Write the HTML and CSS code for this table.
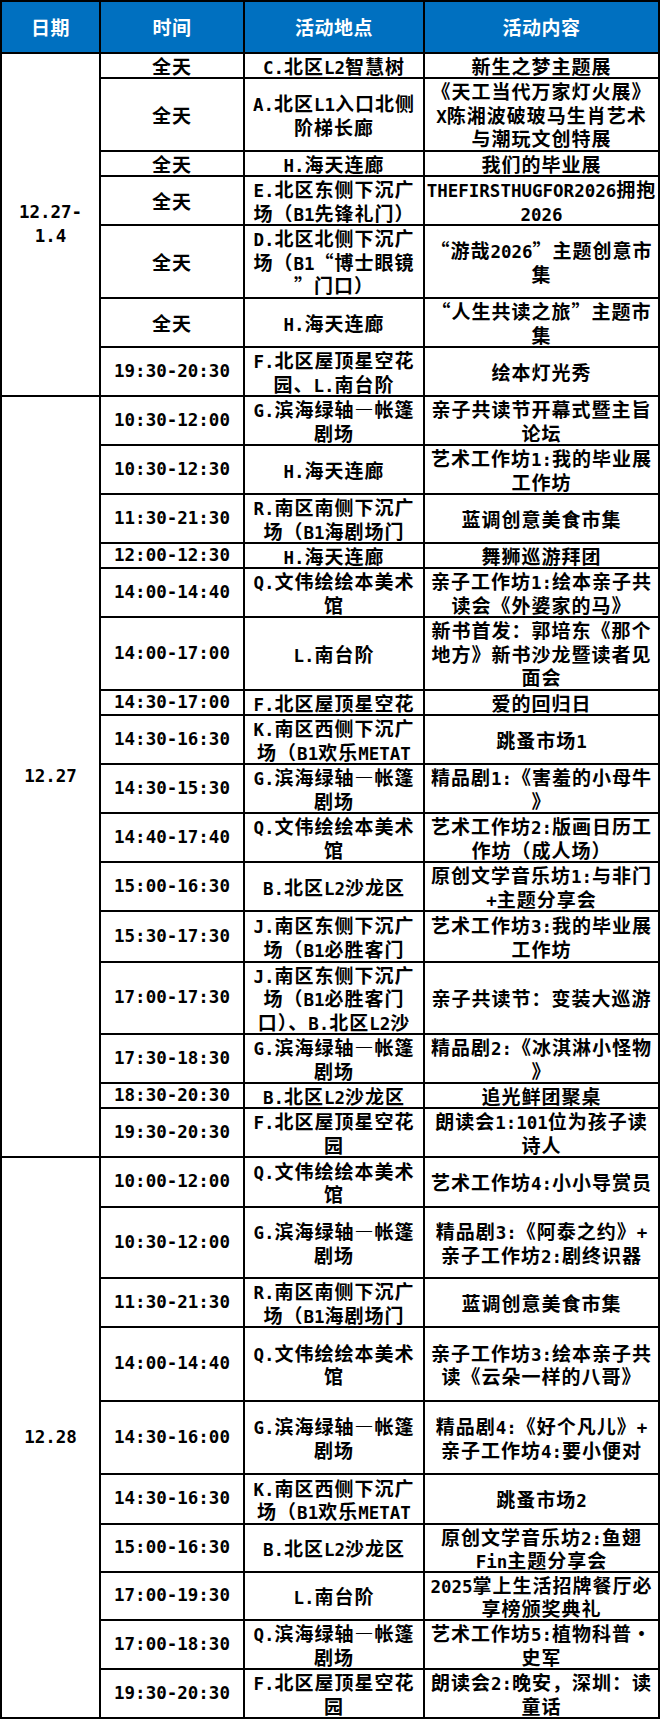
FILE: index.html
```html
<!DOCTYPE html>
<html lang="zh-CN">
<head>
<meta charset="utf-8">
<title>活动日程</title>
<link rel="stylesheet" href="styles.css">
</head>
<body>
<div class="sched">
  <div class="c th"><span class="tx">日期</span></div>
  <div class="c th"><span class="tx">时间</span></div>
  <div class="c th"><span class="tx">活动地点</span></div>
  <div class="c th"><span class="tx">活动内容</span></div>

  <div class="c d span7"><span class="tx">12.27-<br>1.4</span></div>
  <div class="c"><span class="tx">全天</span></div><div class="c"><span class="tx"><span class="m">C.</span>北区<span class="m">L2</span>智慧树</span></div><div class="c"><span class="tx">新生之梦主题展</span></div>
  <div class="c"><span class="tx">全天</span></div><div class="c"><span class="tx"><span class="m">A.</span>北区<span class="m">L1</span>入口北侧<br>阶梯长廊</span></div><div class="c"><span class="tx">《天工当代万家灯火展》<br><span class="m">X</span>陈湘波破玻马生肖艺术<br>与潮玩文创特展</span></div>
  <div class="c"><span class="tx">全天</span></div><div class="c"><span class="tx"><span class="m">H.</span>海天连廊</span></div><div class="c"><span class="tx">我们的毕业展</span></div>
  <div class="c"><span class="tx">全天</span></div><div class="c"><span class="tx"><span class="m">E.</span>北区东侧下沉广<br>场（<span class="m">B1</span>先锋礼门）</span></div><div class="c"><span class="tx"><span class="m">THEFIRSTHUGFOR2026</span>拥抱<br><span class="m">2026</span></span></div>
  <div class="c"><span class="tx">全天</span></div><div class="c"><span class="tx"><span class="m">D.</span>北区北侧下沉广<br>场（<span class="m">B1</span>“博士眼镜<br>”门口）</span></div><div class="c"><span class="tx">“游哉<span class="m">2026</span>”主题创意市<br>集</span></div>
  <div class="c"><span class="tx">全天</span></div><div class="c"><span class="tx"><span class="m">H.</span>海天连廊</span></div><div class="c"><span class="tx">“人生共读之旅”主题市<br>集</span></div>
  <div class="c t"><span class="tx">19:30-20:30</span></div><div class="c"><span class="tx"><span class="m">F.</span>北区屋顶星空花<br>园、<span class="m">L.</span>南台阶</span></div><div class="c"><span class="tx">绘本灯光秀</span></div>

  <div class="c d span16"><span class="tx">12.27</span></div>
  <div class="c t"><span class="tx">10:30-12:00</span></div><div class="c"><span class="tx"><span class="m">G.</span>滨海绿轴—帐篷<br>剧场</span></div><div class="c"><span class="tx">亲子共读节开幕式暨主旨<br>论坛</span></div>
  <div class="c t"><span class="tx">10:30-12:30</span></div><div class="c"><span class="tx"><span class="m">H.</span>海天连廊</span></div><div class="c"><span class="tx">艺术工作坊<span class="m">1:</span>我的毕业展<br>工作坊</span></div>
  <div class="c t"><span class="tx">11:30-21:30</span></div><div class="c"><span class="tx"><span class="m">R.</span>南区南侧下沉广<br>场（<span class="m">B1</span>海剧场门</span></div><div class="c"><span class="tx">蓝调创意美食市集</span></div>
  <div class="c t"><span class="tx">12:00-12:30</span></div><div class="c"><span class="tx"><span class="m">H.</span>海天连廊</span></div><div class="c"><span class="tx">舞狮巡游拜团</span></div>
  <div class="c t"><span class="tx">14:00-14:40</span></div><div class="c"><span class="tx"><span class="m">Q.</span>文伟绘绘本美术<br>馆</span></div><div class="c"><span class="tx">亲子工作坊<span class="m">1:</span>绘本亲子共<br>读会《外婆家的马》</span></div>
  <div class="c t"><span class="tx">14:00-17:00</span></div><div class="c"><span class="tx"><span class="m">L.</span>南台阶</span></div><div class="c"><span class="tx">新书首发：郭培东《那个<br>地方》新书沙龙暨读者见<br>面会</span></div>
  <div class="c t"><span class="tx">14:30-17:00</span></div><div class="c"><span class="tx"><span class="m">F.</span>北区屋顶星空花</span></div><div class="c"><span class="tx">爱的回归日</span></div>
  <div class="c t"><span class="tx">14:30-16:30</span></div><div class="c"><span class="tx"><span class="m">K.</span>南区西侧下沉广<br>场（<span class="m">B1</span>欢乐<span class="m">METAT</span></span></div><div class="c"><span class="tx">跳蚤市场<span class="m">1</span></span></div>
  <div class="c t"><span class="tx">14:30-15:30</span></div><div class="c"><span class="tx"><span class="m">G.</span>滨海绿轴—帐篷<br>剧场</span></div><div class="c"><span class="tx">精品剧<span class="m">1:</span>《害羞的小母牛<br>》</span></div>
  <div class="c t"><span class="tx">14:40-17:40</span></div><div class="c"><span class="tx"><span class="m">Q.</span>文伟绘绘本美术<br>馆</span></div><div class="c"><span class="tx">艺术工作坊<span class="m">2:</span>版画日历工<br>作坊（成人场）</span></div>
  <div class="c t"><span class="tx">15:00-16:30</span></div><div class="c"><span class="tx"><span class="m">B.</span>北区<span class="m">L2</span>沙龙区</span></div><div class="c"><span class="tx">原创文学音乐坊<span class="m">1:</span>与非门<br><span class="m">+</span>主题分享会</span></div>
  <div class="c t"><span class="tx">15:30-17:30</span></div><div class="c"><span class="tx"><span class="m">J.</span>南区东侧下沉广<br>场（<span class="m">B1</span>必胜客门</span></div><div class="c"><span class="tx">艺术工作坊<span class="m">3:</span>我的毕业展<br>工作坊</span></div>
  <div class="c t"><span class="tx">17:00-17:30</span></div><div class="c"><span class="tx"><span class="m">J.</span>南区东侧下沉广<br>场（<span class="m">B1</span>必胜客门<br>口）、<span class="m">B.</span>北区<span class="m">L2</span>沙</span></div><div class="c"><span class="tx">亲子共读节：变装大巡游</span></div>
  <div class="c t"><span class="tx">17:30-18:30</span></div><div class="c"><span class="tx"><span class="m">G.</span>滨海绿轴—帐篷<br>剧场</span></div><div class="c"><span class="tx">精品剧<span class="m">2:</span>《冰淇淋小怪物<br>》</span></div>
  <div class="c t"><span class="tx">18:30-20:30</span></div><div class="c"><span class="tx"><span class="m">B.</span>北区<span class="m">L2</span>沙龙区</span></div><div class="c"><span class="tx">追光鲜团聚桌</span></div>
  <div class="c t"><span class="tx">19:30-20:30</span></div><div class="c"><span class="tx"><span class="m">F.</span>北区屋顶星空花<br>园</span></div><div class="c"><span class="tx">朗读会<span class="m">1:101</span>位为孩子读<br>诗人</span></div>

  <div class="c d span10"><span class="tx">12.28</span></div>
  <div class="c t"><span class="tx">10:00-12:00</span></div><div class="c"><span class="tx"><span class="m">Q.</span>文伟绘绘本美术<br>馆</span></div><div class="c"><span class="tx">艺术工作坊<span class="m">4:</span>小小导赏员</span></div>
  <div class="c t"><span class="tx">10:30-12:00</span></div><div class="c"><span class="tx"><span class="m">G.</span>滨海绿轴—帐篷<br>剧场</span></div><div class="c"><span class="tx">精品剧<span class="m">3:</span>《阿泰之约》<span class="m">+</span><br>亲子工作坊<span class="m">2:</span>剧终识器</span></div>
  <div class="c t"><span class="tx">11:30-21:30</span></div><div class="c"><span class="tx"><span class="m">R.</span>南区南侧下沉广<br>场（<span class="m">B1</span>海剧场门</span></div><div class="c"><span class="tx">蓝调创意美食市集</span></div>
  <div class="c t"><span class="tx">14:00-14:40</span></div><div class="c"><span class="tx"><span class="m">Q.</span>文伟绘绘本美术<br>馆</span></div><div class="c"><span class="tx">亲子工作坊<span class="m">3:</span>绘本亲子共<br>读《云朵一样的八哥》</span></div>
  <div class="c t"><span class="tx">14:30-16:00</span></div><div class="c"><span class="tx"><span class="m">G.</span>滨海绿轴—帐篷<br>剧场</span></div><div class="c"><span class="tx">精品剧<span class="m">4:</span>《好个凡儿》<span class="m">+</span><br>亲子工作坊<span class="m">4:</span>要小便对</span></div>
  <div class="c t"><span class="tx">14:30-16:30</span></div><div class="c"><span class="tx"><span class="m">K.</span>南区西侧下沉广<br>场（<span class="m">B1</span>欢乐<span class="m">METAT</span></span></div><div class="c"><span class="tx">跳蚤市场<span class="m">2</span></span></div>
  <div class="c t"><span class="tx">15:00-16:30</span></div><div class="c"><span class="tx"><span class="m">B.</span>北区<span class="m">L2</span>沙龙区</span></div><div class="c"><span class="tx">原创文学音乐坊<span class="m">2:</span>鱼翅<br><span class="m">Fin</span>主题分享会</span></div>
  <div class="c t"><span class="tx">17:00-19:30</span></div><div class="c"><span class="tx"><span class="m">L.</span>南台阶</span></div><div class="c"><span class="tx"><span class="m">2025</span>掌上生活招牌餐厅必<br>享榜颁奖典礼</span></div>
  <div class="c t"><span class="tx">17:00-18:30</span></div><div class="c"><span class="tx"><span class="m">Q.</span>滨海绿轴—帐篷<br>剧场</span></div><div class="c"><span class="tx">艺术工作坊<span class="m">5:</span>植物科普·<br>史军</span></div>
  <div class="c t"><span class="tx">19:30-20:30</span></div><div class="c"><span class="tx"><span class="m">F.</span>北区屋顶星空花<br>园</span></div><div class="c"><span class="tx">朗读会<span class="m">2:</span>晚安，深圳：读<br>童话</span></div>
</div>
</body>
</html>
```

FILE: styles.css
```css
html, body {
  margin: 0;
  padding: 0;
  background: #ffffff;
}

.sched {
  box-sizing: border-box;
  width: 660px;
  display: grid;
  grid-template-columns: 97px 142px 178px 233px;
  grid-template-rows:
    50px
    23px 71px 23px 47px 71px 47px 47px
    47px 47px 47px 23px 47px 71px 23px 47px 47px 47px 47px 49px 70px 47px 23px 47px
    48px 69px 47px 72px 71px 48px 46px 46px 47px 47px;
  gap: 2px;
  padding: 2px;
  background: #000000;
  font-family: "Noto Sans CJK SC", "Noto Sans", sans-serif;
  font-weight: 700;
  font-size: 19px;
  letter-spacing: 1px;
  color: #000000;
}

.c {
  background: #ffffff;
  display: flex;
  align-items: center;
  justify-content: center;
  text-align: center;
  white-space: nowrap;
  line-height: 23.5px;
}

.tx {
  display: block;
}

.th {
  background: #0070c0;
  color: #ffffff;
  letter-spacing: 0.5px;
}

.t, .d, .m {
  font-family: "DejaVu Sans Mono", "Liberation Mono", monospace;
  letter-spacing: 0;
}

.t, .d {
  font-size: 17.5px;
}

.m {
  font-size: 17.5px;
  line-height: 1;
}

.span7 { grid-row: span 7; }
.span16 { grid-row: span 16; }
.span10 { grid-row: span 10; }
```
